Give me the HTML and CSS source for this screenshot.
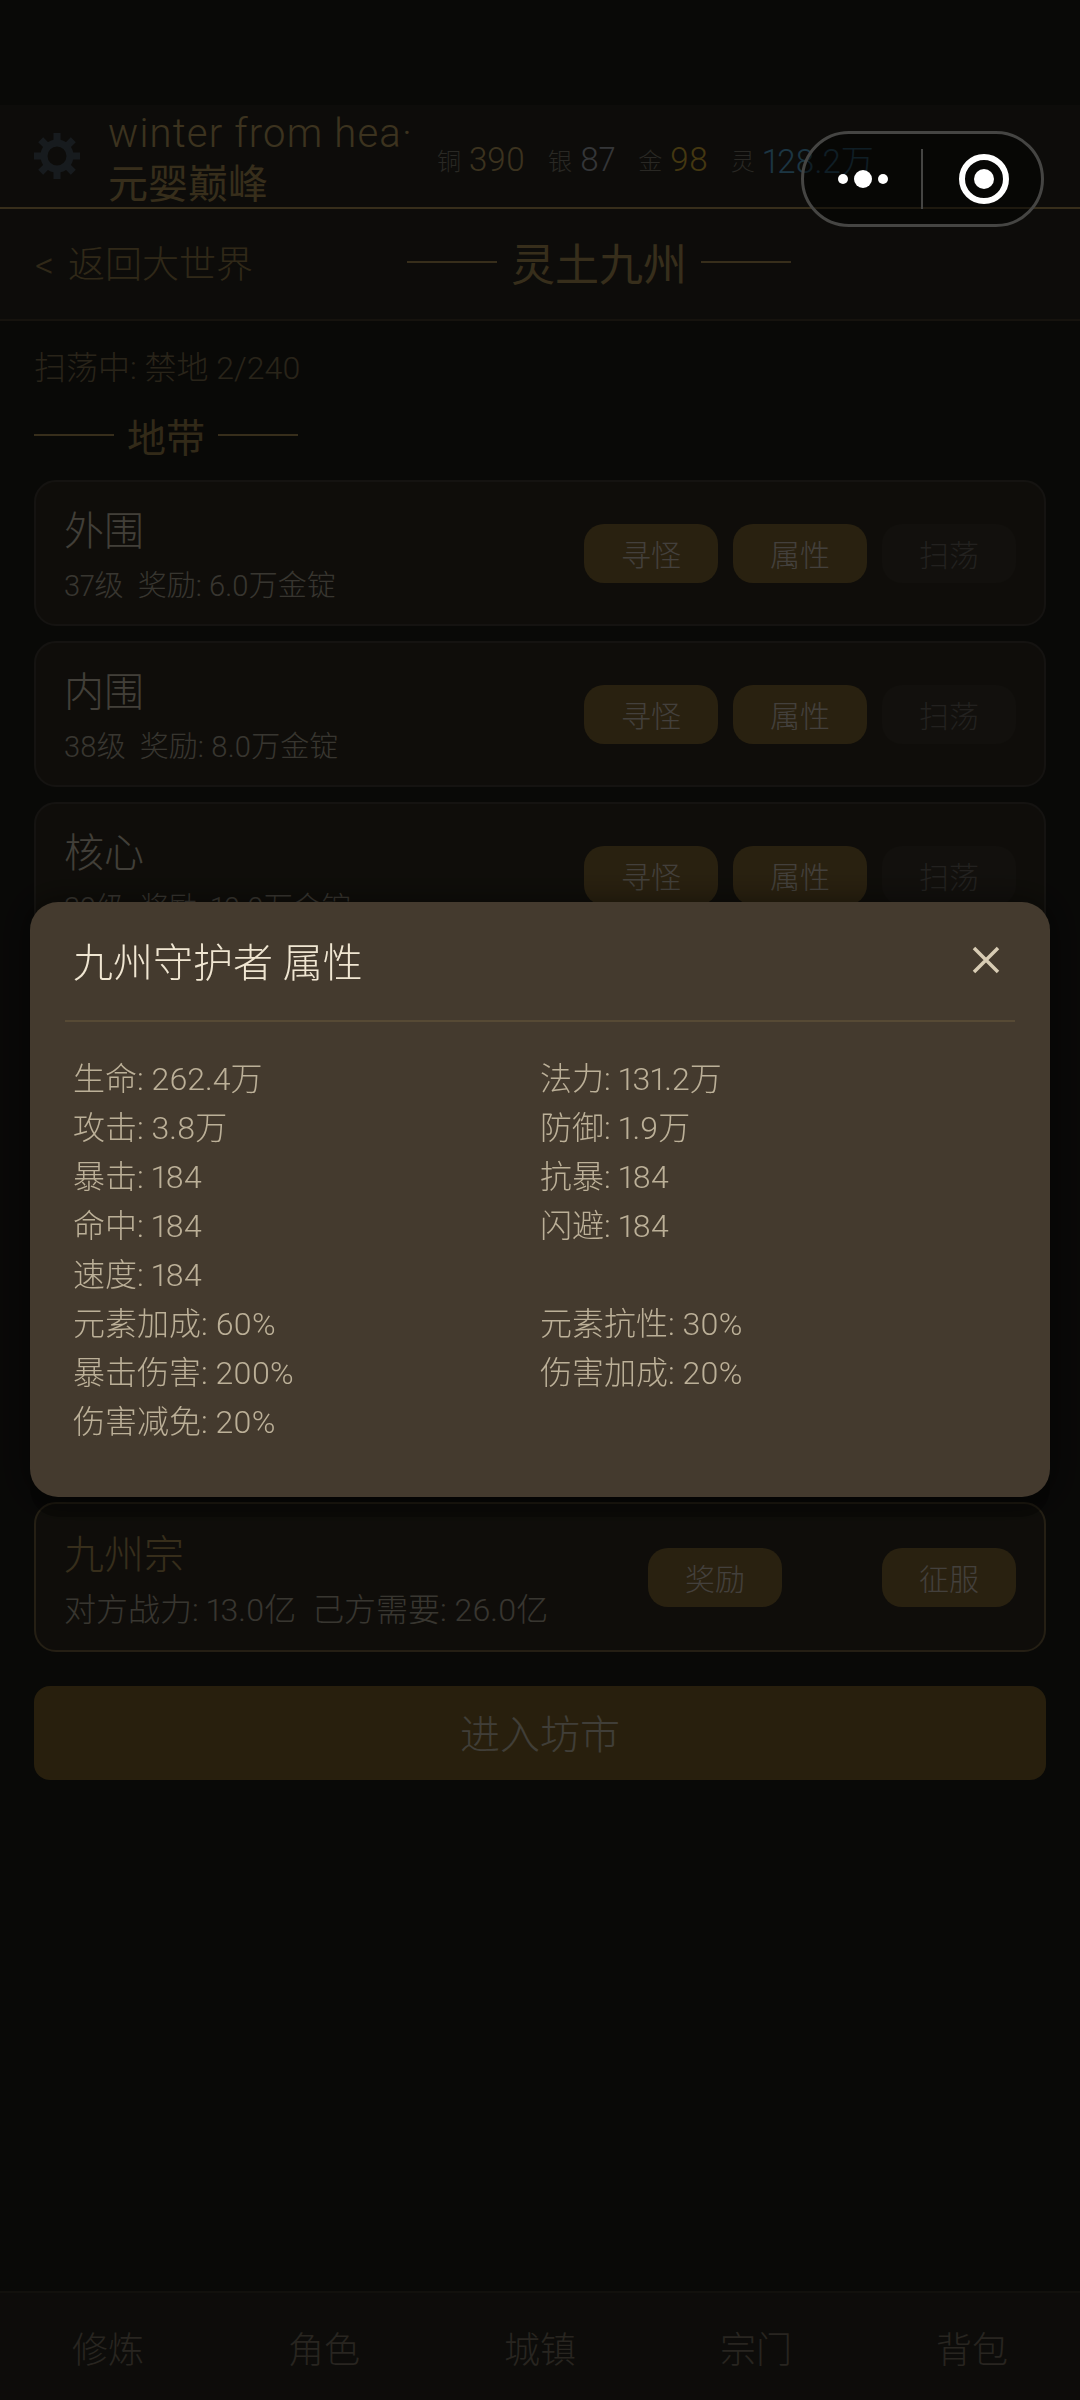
FILE: index.html
```html
<!DOCTYPE html>
<html lang="zh-CN">
<head>
    <meta charset="UTF-8">
    <meta name="viewport" content="width=device-width, initial-scale=1.0">
    <title>灵土九州</title>
    <link rel="stylesheet" href="styles.css">
</head>
<body>

    <div class="page">
        <!-- Top bar -->
        <div class="topbar">
            <svg class="gear" viewBox="0 0 48 48" width="48" height="48">
                <circle cx="24" cy="24" r="13" fill="none" stroke="#6f8aa8" stroke-width="7"/>
                <g stroke="#6f8aa8" stroke-width="7">
                    <path d="M24 1v9M24 38v9M1 24h9M38 24h9M7.7 7.7l6.4 6.4M33.9 33.9l6.4 6.4M7.7 40.3l6.4-6.4M33.9 14.1l6.4-6.4"/>
                </g>
            </svg>
            <div class="player">
                <div class="player-name">winter from hea·</div>
                <div class="player-rank">元婴巅峰</div>
            </div>
            <div class="money">
                <span class="coin"><small>铜</small><b class="copper">390</b></span>
                <span class="coin"><small>银</small><b class="silver">87</b></span>
                <span class="coin"><small>金</small><b class="gold">98</b></span>
                <span class="coin"><small>灵</small><b class="spirit">128.2万</b></span>
            </div>
        </div>

        <!-- Sub header -->
        <div class="subbar">
            <a class="back" href="#">&lt; 返回大世界</a>
            <div class="map-title"><i class="rule"></i>灵土九州<i class="rule"></i></div>
        </div>

        <div class="content">
            <p class="sweep">扫荡中: 禁地 2/240</p>
            <div class="section-title"><i class="rule"></i>地带<i class="rule"></i></div>

            <div class="card">
                <div class="info">
                    <div class="card-name">外围</div>
                    <div class="card-sub">37级&nbsp;&nbsp;奖励: 6.0万金锭</div>
                </div>
                <div class="btns">
                    <span class="btn">寻怪</span>
                    <span class="btn">属性</span>
                    <span class="btn off">扫荡</span>
                </div>
            </div>
            <div class="card">
                <div class="info">
                    <div class="card-name">内围</div>
                    <div class="card-sub">38级&nbsp;&nbsp;奖励: 8.0万金锭</div>
                </div>
                <div class="btns">
                    <span class="btn">寻怪</span>
                    <span class="btn">属性</span>
                    <span class="btn off">扫荡</span>
                </div>
            </div>
            <div class="card">
                <div class="info">
                    <div class="card-name">核心</div>
                    <div class="card-sub">39级&nbsp;&nbsp;奖励: 10.0万金锭</div>
                </div>
                <div class="btns">
                    <span class="btn">寻怪</span>
                    <span class="btn">属性</span>
                    <span class="btn off">扫荡</span>
                </div>
            </div>

            <!-- Sect card, the gap above it sits under the dialog -->
            <div class="card sect">
                <div class="info">
                    <div class="card-name">九州宗</div>
                    <div class="card-sub">对方战力: 13.0亿&nbsp;&nbsp;己方需要: 26.0亿</div>
                </div>
                <div class="btns wide">
                    <span class="btn">奖励</span>
                    <span class="btn">征服</span>
                </div>
            </div>

            <div class="enter">进入坊市</div>
        </div>

        <!-- Bottom tabs -->
        <div class="tabs">
            <span>修炼</span>
            <span>角色</span>
            <span>城镇</span>
            <span>宗门</span>
            <span>背包</span>
        </div>
    </div>

    <!-- Attribute dialog -->
    <div class="overlay">
        <div class="dialog">
            <div class="dialog-head">
                <span class="dialog-title">九州守护者 属性</span>
                <svg class="close" viewBox="0 0 28 28" width="28" height="28">
                    <path d="M2 2l24 24M26 2L2 26" stroke="#d8ccb4" stroke-width="3.5" fill="none"/>
                </svg>
            </div>
            <div class="stats">
                <span>生命: 262.4万</span><span>法力: 131.2万</span>
                <span>攻击: 3.8万</span><span>防御: 1.9万</span>
                <span>暴击: 184</span><span>抗暴: 184</span>
                <span>命中: 184</span><span>闪避: 184</span>
                <span>速度: 184</span><span></span>
                <span>元素加成: 60%</span><span>元素抗性: 30%</span>
                <span>暴击伤害: 200%</span><span>伤害加成: 20%</span>
                <span>伤害减免: 20%</span><span></span>
            </div>
        </div>
    </div>

    <!-- Mini program capsule -->
    <div class="capsule">
        <div class="capsule-dots"><i></i><i class="big"></i><i></i></div>
        <div class="capsule-line"></div>
        <div class="capsule-target"><i></i></div>
    </div>

</body>
</html>
```

FILE: styles.css
```css
* {
    box-sizing: border-box;
}

body {
    margin: 0;
    background-color: #1f1e1a;
    font-family: "Roboto", "Noto Sans CJK SC", sans-serif;
    font-weight: 300;
    font-variant-numeric: proportional-nums;
    color: #d8cdb4;
}

.page {
    height: 2400px;
    display: flex;
    flex-direction: column;
    overflow: hidden;
}

.rule {
    display: block;
    height: 2px;
    background-color: #b89a5c;
}

/* Top bar */
.topbar {
    margin-top: 105px;
    height: 104px;
    padding-left: 33px;
    display: flex;
    align-items: center;
    background-color: #2c2a22;
    border-bottom: 2px solid #b89a5c;
}

.gear {
    flex-shrink: 0;
    opacity: 0.5;
}

.player {
    margin-left: 27px;
    padding-top: 5px;
    width: 329px;
    flex-shrink: 0;
    color: #c9aa68;
}

.player-name {
    font-size: 40px;
    line-height: 51px;
    letter-spacing: 1.2px;
    white-space: nowrap;
    overflow: hidden;
}

.player-rank {
    font-size: 40px;
    line-height: 51px;
    font-weight: 400;
    color: #b89a5c;
}

.money {
    display: flex;
    align-items: center;
    gap: 23px;
    margin-top: 6px;
}

.coin {
    display: flex;
    align-items: center;
    gap: 8px;
    white-space: nowrap;
}

.coin small {
    font-size: 24px;
    color: #8a8578;
}

.coin b {
    font-size: 33px;
    font-weight: 300;
}

.copper { color: #c9aa68; }
.silver { color: #b0b4bc; }
.gold { color: #e5bc3a; }
.spirit { color: #5fb4e0; }

/* Sub header */
.subbar {
    height: 112px;
    padding: 0 289px 4px 35px;
    display: flex;
    align-items: center;
    background-color: #2c2a22;
    border-bottom: 2px solid #4a4230;
}

.back {
    font-size: 37px;
    word-spacing: 5px;
    color: #a08850;
    text-decoration: none;
}

.map-title {
    margin-left: auto;
    display: flex;
    align-items: center;
    gap: 14px;
    font-size: 44px;
    font-weight: 400;
    color: #b89a5c;
}

.map-title .rule {
    width: 90px;
}

/* Content */
.content {
    padding: 0 34px;
}

.sweep {
    margin: 26px 0 0;
    font-size: 32px;
    line-height: 42px;
    color: #8a7a55;
}

.section-title {
    display: flex;
    align-items: center;
    gap: 13px;
    margin: 16px 0 1px;
    height: 60px;
    font-size: 39px;
    font-weight: 400;
    color: #a88c52;
}

.section-title .rule {
    width: 80px;
}

.card {
    height: 146px;
    margin-top: 15px;
    padding: 0 28px;
    display: flex;
    align-items: center;
    justify-content: space-between;
    background-color: #332e22;
    border: 2px solid #47423a;
    border-radius: 22px;
}

.info {
    padding-top: 5px;
}

.card-name {
    font-size: 40px;
    line-height: 50px;
    color: #dcd4bf;
}

.card-sub {
    margin-top: 10px;
    font-size: 29px;
    line-height: 38px;
    color: #bdb5a2;
}

.btns {
    display: flex;
    gap: 15px;
}

.btn {
    width: 134px;
    height: 59px;
    display: flex;
    align-items: center;
    justify-content: center;
    font-size: 30px;
    color: #e0d8c8;
    background-color: #8a6e36;
    border-radius: 20px;
}

.btn.off {
    background-color: #3c362c;
    color: #75716a;
}

.sect {
    margin-top: 554px;
    height: 150px;
    border-color: #7c6a45;
}

.sect .card-name {
    color: #b89a5c;
}

.sect .card-sub {
    font-size: 32px;
}

.btns.wide {
    gap: 100px;
}

.enter {
    height: 94px;
    margin-top: 34px;
    padding-bottom: 3px;
    display: flex;
    align-items: center;
    justify-content: center;
    font-size: 40px;
    color: #d8d0bc;
    background-color: #85692c;
    border-radius: 16px;
}

/* Tabs */
.tabs {
    margin-top: auto;
    height: 109px;
    display: flex;
    align-items: center;
    background-color: #2c2a22;
    border-top: 2px solid #3f3a2c;
}

.tabs span {
    flex: 1;
    text-align: center;
    font-size: 36px;
    color: #857c6c;
}

/* Dialog */
.overlay {
    position: fixed;
    top: 0;
    left: 0;
    width: 1080px;
    height: 2400px;
    background-color: rgba(0, 0, 0, 0.7);
}

.dialog {
    position: absolute;
    top: 902px;
    left: 30px;
    width: 1020px;
    height: 595px;
    padding: 0 35px;
    background-color: #443a2e;
    border-radius: 28px;
    box-shadow: 0 20px 0 rgba(0, 0, 0, 0.3), 0 0 30px rgba(0, 0, 0, 0.5);
}

.dialog-head {
    height: 120px;
    padding: 0 15px 2px 8px;
    display: flex;
    align-items: center;
    justify-content: space-between;
    border-bottom: 2px solid #574a35;
}

.dialog-title {
    font-size: 40px;
    color: #f0e6d2;
}

.stats {
    display: grid;
    grid-template-columns: 467px 1fr;
    grid-auto-rows: 49px;
    margin-top: 33px;
    padding-left: 8px;
    font-size: 32px;
    line-height: 49px;
    color: #bcb098;
}

/* Capsule */
.capsule {
    position: fixed;
    top: 131px;
    left: 801px;
    width: 243px;
    height: 96px;
    display: flex;
    align-items: center;
    background-color: rgba(0, 0, 0, 0.45);
    border: 3px solid #454543;
    border-radius: 48px;
}

.capsule-dots {
    width: 117px;
    display: flex;
    align-items: center;
    justify-content: center;
    gap: 6px;
}

.capsule-dots i {
    width: 10px;
    height: 10px;
    border-radius: 50%;
    background-color: #fff;
}

.capsule-dots i.big {
    width: 18px;
    height: 18px;
}

.capsule-line {
    width: 2px;
    height: 60px;
    background-color: #454543;
}

.capsule-target {
    flex: 1;
    padding-left: 4px;
    display: flex;
    align-items: center;
    justify-content: center;
}

.capsule-target i {
    width: 50px;
    height: 50px;
    display: flex;
    align-items: center;
    justify-content: center;
    border: 6px solid #fff;
    border-radius: 50%;
}

.capsule-target i::after {
    content: "";
    width: 20px;
    height: 20px;
    border-radius: 50%;
    background-color: #fff;
}
```
